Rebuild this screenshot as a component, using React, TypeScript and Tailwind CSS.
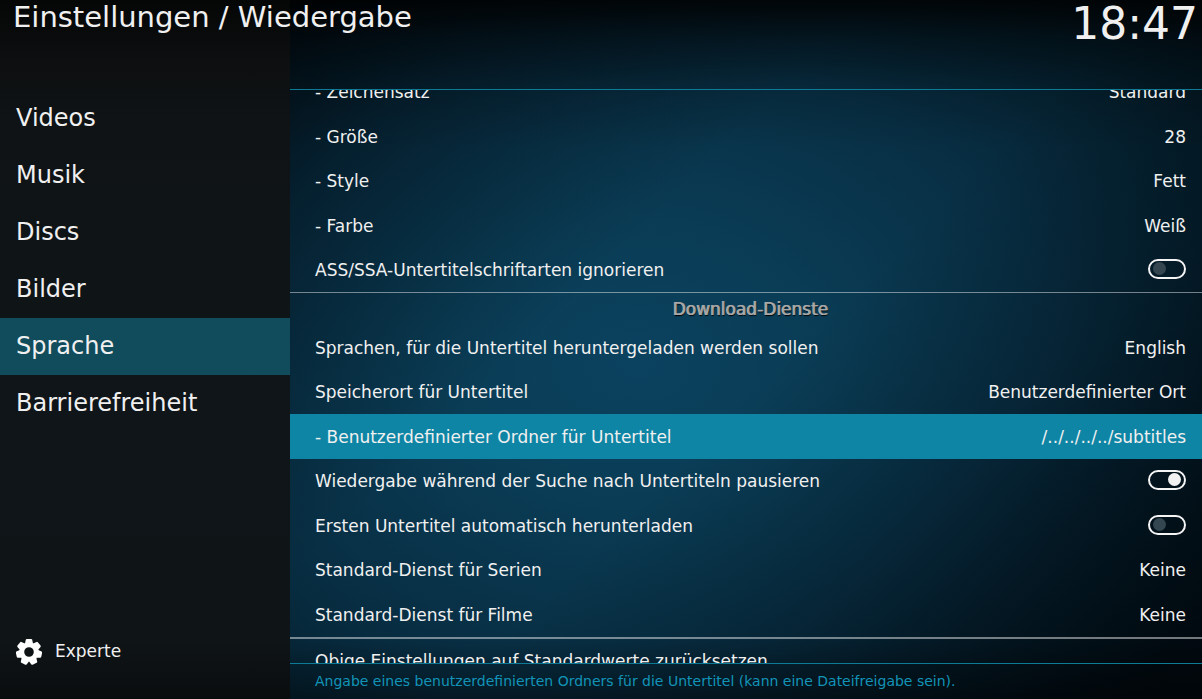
const sections = [
  { label: 'Videos' },
  { label: 'Musik' },
  { label: 'Discs' },
  { label: 'Bilder' },
  { label: 'Sprache', current: true },
  { label: 'Barrierefreiheit' },
];

type Setting = { label: string; value?: string; on?: boolean; focused?: boolean };

const subtitleStyle: Setting[] = [
  { label: '- Größe', value: '28' },
  { label: '- Style', value: 'Fett' },
  { label: '- Farbe', value: 'Weiß' },
  { label: 'ASS/SSA-Untertitelschriftarten ignorieren', on: false },
];

const downloads: Setting[] = [
  { label: 'Sprachen, für die Untertitel heruntergeladen werden sollen', value: 'English' },
  { label: 'Speicherort für Untertitel', value: 'Benutzerdefinierter Ort' },
  { label: '- Benutzerdefinierter Ordner für Untertitel', value: '/../../../../subtitles', focused: true },
  { label: 'Wiedergabe während der Suche nach Untertiteln pausieren', on: true },
  { label: 'Ersten Untertitel automatisch herunterladen', on: false },
  { label: 'Standard-Dienst für Serien', value: 'Keine' },
  { label: 'Standard-Dienst für Filme', value: 'Keine' },
];

function Row({ label, value, on, focused }: Setting) {
  if (value === undefined) {
    return (
      <label className="flex w-full items-center justify-between pt-0.5 pr-4 pl-[25px]">
        <span>{label}</span>
        <input
          type="checkbox"
          defaultChecked={on}
          className="mb-1 flex h-5 w-[38px] appearance-none items-center rounded-full border-2 border-[#f4f4f4] px-[3px] before:block before:size-[13px] before:rounded-full before:bg-[#34464f] checked:justify-end checked:before:bg-[#f2f2f2]"
        />
      </label>
    );
  }
  return (
    <button
      type="button"
      className={
        focused
          ? 'flex w-full items-center justify-between bg-[#0f85a5] pt-0.5 pr-4 pl-[25px] text-left'
          : 'flex w-full items-center justify-between pt-0.5 pr-4 pl-[25px] text-left'
      }
    >
      <span>{label}</span>
      <span>{value}</span>
    </button>
  );
}

function Gear() {
  const teeth = [0, 1, 2, 3, 4, 5, 6];
  return (
    <svg viewBox="-13 -13 26 26" className="size-[26px]" fill="#fff" aria-hidden="true">
      <circle r="7.3" fill="none" stroke="#fff" strokeWidth="5" />
      {teeth.map((i) => (
        <path
          key={i}
          d="M-4 -8.5 L-3.2 -12.2 Q-3 -13 -2.2 -13 H2.2 Q3 -13 3.2 -12.2 L4 -8.5Z"
          transform={`rotate(${(i * 360) / 7})`}
        />
      ))}
    </svg>
  );
}

export default function App() {
  return (
    <div className="flex h-screen flex-col overflow-hidden bg-[#01080d] bg-[linear-gradient(to_bottom,rgba(0,0,0,0.85)_0px,rgba(0,0,0,0.45)_40px,rgba(0,0,0,0.15)_88px,rgba(0,0,0,0)_150px),linear-gradient(to_top,rgba(0,0,0,0.4)_0px,rgba(0,0,0,0)_60px),linear-gradient(135deg,rgba(0,4,8,0.65)_15%,rgba(0,4,8,0.35)_26%,rgba(0,4,8,0)_46%,rgba(0,4,8,0)_60%,rgba(0,4,8,0.25)_75%,rgba(0,4,8,0.75)_96%),radial-gradient(ellipse_760px_570px_at_53%_52%,#0b425f_0%,#0a3c55_25%,#082e43_55%,#041f2d_80%,#01080d_120%)] font-['DejaVu_Sans',sans-serif] text-[17px] text-[#f0f0f0]">
      <div className="flex min-h-0 flex-1">
        <aside className="flex w-[290px] shrink-0 flex-col bg-[linear-gradient(to_bottom,#050606_0px,#0d0f10_60px,#0f1315_120px,#0f1518_400px,#0f1417_640px,#0a0d0e_699px)]">
          <h1 className="pl-[13px] text-[29px] leading-[34px] whitespace-nowrap">Einstellungen / Wiedergabe</h1>
          <nav className="mt-14 flex flex-col">
            {sections.map((s) => (
              <a
                key={s.label}
                href="#"
                className={
                  s.current
                    ? 'bg-[#114c5c] pl-4 text-[24px] leading-[57px]'
                    : 'pl-4 text-[24px] leading-[57px]'
                }
              >
                {s.label}
              </a>
            ))}
          </nav>
          <button type="button" className="mt-auto mb-[34px] flex items-center gap-[13px] pl-4">
            <Gear />
            <span>Experte</span>
          </button>
        </aside>
        <main className="flex min-w-0 flex-1 flex-col">
          <header className="flex h-[89px] shrink-0 justify-end pr-1">
            <time className="text-[44px] leading-[48px]">18:47</time>
          </header>
          <section className="flex min-h-0 flex-1 flex-col overflow-hidden border-y border-[#0d7a96]">
            <div className="flex h-6 shrink-0 flex-col justify-end overflow-hidden">
              <button type="button" className="flex h-[44px] shrink-0 items-center justify-between pt-px pr-4 pl-[25px]">
                <span>- Zeichensatz</span>
                <span>Standard</span>
              </button>
            </div>
            <div className="grid h-[178px] shrink-0 auto-rows-fr">
              {subtitleStyle.map((s) => (
                <Row key={s.label} {...s} />
              ))}
            </div>
            <h2 className="h-[33px] shrink-0 border-t border-[#ffffff73] pl-2 text-center text-[17px] leading-8 text-[#a8a8a8] [text-shadow:1px_0_0_#a0a0a0,1px_1px_1px_#000]">
              Download-Dienste
            </h2>
            <div className="grid h-[312px] shrink-0 auto-rows-fr">
              {downloads.map((s) => (
                <Row key={s.label} {...s} />
              ))}
            </div>
            <button type="button" className="h-[48px] shrink-0 border-t-2 border-[#ffffff73] pl-[25px] text-left">
              Obige Einstellungen auf Standardwerte zurücksetzen
            </button>
          </section>
          <p className="h-[35px] shrink-0 pl-[25px] text-[14px] leading-[34px] text-[#1294b8]">
            Angabe eines benutzerdefinierten Ordners für die Untertitel (kann eine Dateifreigabe sein).
          </p>
        </main>
      </div>
    </div>
  );
}
